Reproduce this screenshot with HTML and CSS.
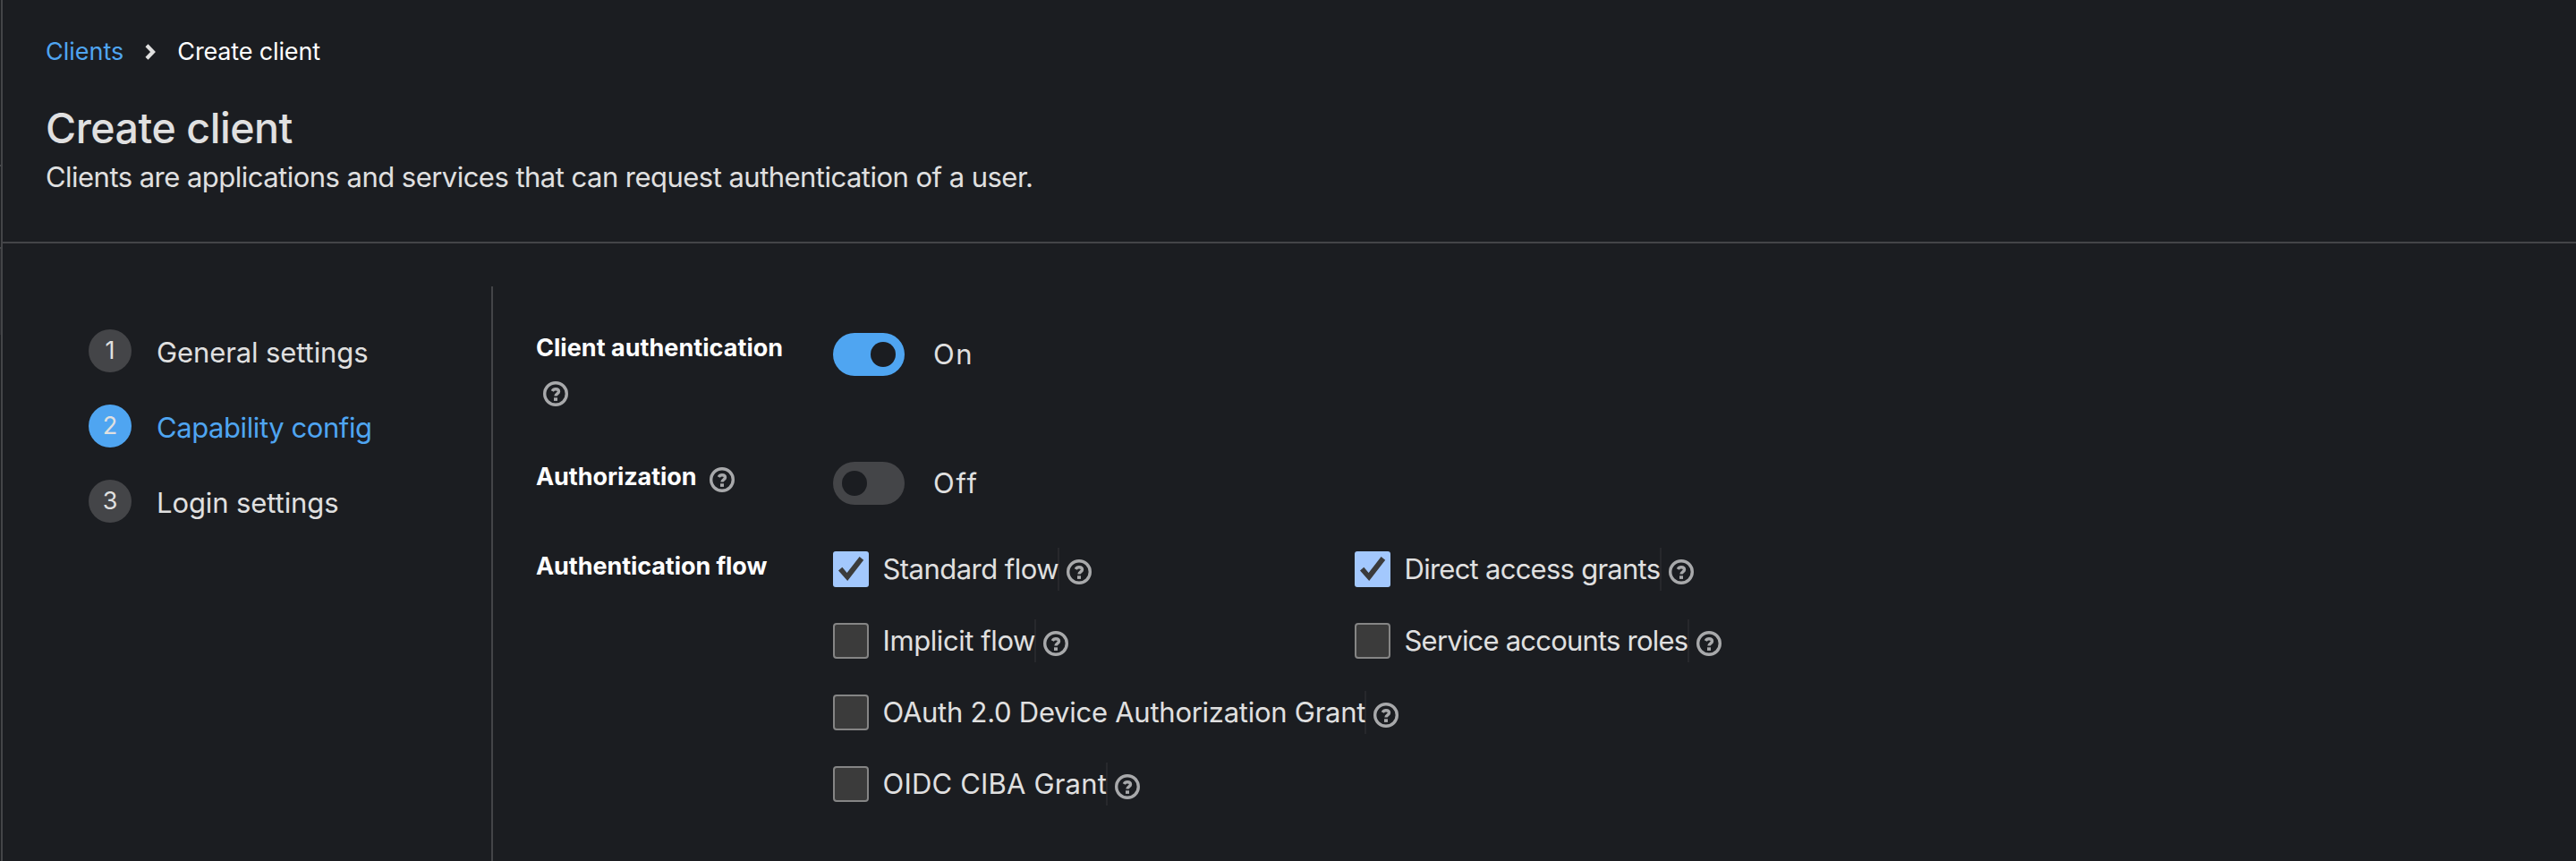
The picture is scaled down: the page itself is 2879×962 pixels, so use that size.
FILE: index.html
```html
<!DOCTYPE html>
<html lang="en">
<head>
<meta charset="utf-8">
<title>Create client</title>
<link rel="stylesheet" href="styles.css">
</head>
<body>
<svg class="defs" aria-hidden="true">
  <symbol id="help" viewBox="0 0 28 28">
    <circle cx="14" cy="14" r="12.3" fill="none" stroke="currentColor" stroke-width="3.4"/>
    <path d="M10.3 11C11.1 9.4 12.4 8.7 14 8.7c2 0 3.5 1.1 3.5 2.8 0 2.3-3.5 2.4-3.5 5.1" fill="none" stroke="currentColor" stroke-width="3.4"/>
    <rect x="12" y="18.3" width="4" height="3.6" fill="currentColor"/>
  </symbol>
  <symbol id="check" viewBox="0 0 40 40">
    <path d="M6 21.5 10.3 17.8 15.6 24 29.6 6 34.2 9.8 16.2 33Z" fill="currentColor"/>
  </symbol>
</svg>
<div class="page">
  <div class="sidebar-edge"><i class="edge-item first"></i><i class="edge-item current"></i></div>
  <div class="content">
    <header class="header">
      <nav class="breadcrumb">
        <a class="crumb-link">Clients</a>
        <svg class="chevron" viewBox="0 0 12 18"><path d="M2 1.8 9 9 2 16.2" fill="none" stroke="currentColor" stroke-width="4.2"/></svg>
        <span class="crumb-current">Create client</span>
      </nav>
      <h1 class="title">Create client</h1>
      <p class="subtitle">Clients are applications and services that can request authentication of a user.</p>
    </header>
    <div class="wizard">
      <ol class="steps">
        <li class="step"><span class="num">1</span><span class="step-name general">General settings</span></li>
        <li class="step active"><span class="num">2</span><span class="step-name capability">Capability config</span></li>
        <li class="step"><span class="num">3</span><span class="step-name">Login settings</span></li>
      </ol>
      <main class="form">
        <div class="field">
          <div class="label wrap"><span class="long">Client authentication</span><svg class="help"><use href="#help"/></svg></div>
          <div class="toggle"><span class="track on"><span class="knob"></span></span><span class="state-on">On</span></div>
        </div>
        <div class="field">
          <div class="label"><span class="short">Authorization</span><svg class="help"><use href="#help"/></svg></div>
          <div class="toggle"><span class="track"><span class="knob"></span></span><span class="state-off">Off</span></div>
        </div>
        <div class="field">
          <div class="label"><span>Authentication flow</span></div>
          <div class="flows">
            <div class="flow"><span class="box checked"><svg><use href="#check"/></svg></span><span class="flow-name standard">Standard flow</span><svg class="help"><use href="#help"/></svg></div>
            <div class="flow"><span class="box checked"><svg><use href="#check"/></svg></span><span class="flow-name direct">Direct access grants</span><svg class="help"><use href="#help"/></svg></div>
            <div class="flow"><span class="box"></span><span class="flow-name implicit">Implicit flow</span><svg class="help"><use href="#help"/></svg></div>
            <div class="flow"><span class="box"></span><span class="flow-name service">Service accounts roles</span><svg class="help"><use href="#help"/></svg></div>
            <div class="flow full"><span class="box"></span><span class="flow-name device">OAuth 2.0 Device Authorization Grant</span><svg class="help"><use href="#help"/></svg></div>
            <div class="flow full"><span class="box"></span><span class="flow-name ciba">OIDC CIBA Grant</span><svg class="help"><use href="#help"/></svg></div>
          </div>
        </div>
      </main>
    </div>
  </div>
</div>
</body>
</html>
```

FILE: styles.css
```css
* { box-sizing: border-box; }
body {
  margin: 0;
  background: #1b1d21;
  color: #e0e0e0;
  font: 400 31px/48px Inter, "Liberation Sans", sans-serif;
  overflow: hidden;
}
.defs { display: none; }
.page { display: flex; height: 962px; }

.sidebar-edge { width: 1px; padding-top: 184px; flex: none; }
.edge-item { display: block; border-top: 2px solid #444548; }
.edge-item.first { height: 92px; }
.edge-item.current { height: 98px; background: #292a2e; }

.content { flex: 1; display: flex; flex-direction: column; border-left: 2px solid #444548; }
.header { padding: 37px 48px 48px; border-bottom: 2px solid #444548; height: 272px; }
.breadcrumb { display: flex; align-items: center; font-size: 27px; line-height: 42px; color: #fff; }
.crumb-link { color: #4fa5f1; }
.crumb-current { letter-spacing: -0.15px; }
.chevron { width: 12px; height: 18px; margin: 0 24px; color: #e0e0e0; }
.title { margin: 33px 0 0; font-size: 46.5px; font-weight: 550; line-height: 62px; letter-spacing: -0.45px; }
.subtitle { margin: 0; letter-spacing: -0.53px; }

.wizard { flex: 1; display: flex; padding-top: 48px; }
.steps {
  list-style: none;
  width: 548px;
  margin: 0;
  padding: 48px 0 0 96px;
  border-right: 2px solid #444548;
  display: flex;
  flex-direction: column;
  gap: 36px;
}
.step { display: flex; align-items: center; gap: 28px; height: 48px; }
.num {
  width: 48px;
  height: 48px;
  border-radius: 50%;
  background: #444548;
  font-size: 27px;
  text-align: center;
}
.step-name { padding-top: 3px; line-height: 42px; letter-spacing: -0.1px; }
.step-name.capability { letter-spacing: -0.42px; }
.step.active { color: #4fa5f1; }
.step.active .num { background: #4fa5f1; color: #e0e0e0; }

.form { padding: 47px 0 0 48px; display: grid; grid-template-rows: 144px 100px auto; }
.field { display: grid; grid-template-columns: 332px auto; align-items: start; }
.label { display: flex; padding-top: 1px; font-size: 27px; font-weight: 650; line-height: 42px; color: #fff; letter-spacing: -0.08px; }
.label.wrap { flex-direction: column; }
.long { letter-spacing: 0.03px; }
.short { width: 180px; }
.help { width: 28px; height: 28px; color: #a8a9ab; flex: none; }
.label .help { margin: 10px 0 0 14px; }
.label.wrap .help { margin: 16px 0 0 8px; }

.toggle { display: flex; align-items: center; gap: 32px; padding-top: 5px; }
.track { display: flex; width: 80px; height: 48px; padding: 10px; border-radius: 24px; background: #444548; }
.track.on { background: #4fa5f1; justify-content: flex-end; }
.knob { width: 28px; height: 28px; border-radius: 50%; background: #1b1d21; }
.state-on { letter-spacing: 1.5px; }
.state-off { letter-spacing: 1.8px; }

.flows { display: grid; grid-template-columns: 583px auto; gap: 32px 0; padding-top: 1px; }
.flow { display: flex; align-items: center; height: 48px; }
.flow.full { grid-column: 1 / -1; }
.flow .help { margin: 6px 0 0 8px; }
.box { width: 40px; height: 40px; border: 2px solid #858585; border-radius: 4px; background: #3b3b3b; flex: none; }
.box.checked { border: 0; border-radius: 3px; background: #a3c8fd; color: #3b3b3b; }
.box svg { display: block; width: 40px; height: 40px; }
.flow-name { margin-left: 14px; height: 48px; padding-left: 1.5px; border-right: 2px solid #27282c; white-space: nowrap; }
.standard { width: 199px; letter-spacing: -0.54px; }
.implicit { width: 173px; letter-spacing: -0.42px; }
.device { width: 542px; letter-spacing: -0.26px; }
.ciba { width: 253px; letter-spacing: 0.18px; }
.direct { width: 289px; letter-spacing: -0.74px; }
.service { width: 320px; letter-spacing: -0.79px; }
```
